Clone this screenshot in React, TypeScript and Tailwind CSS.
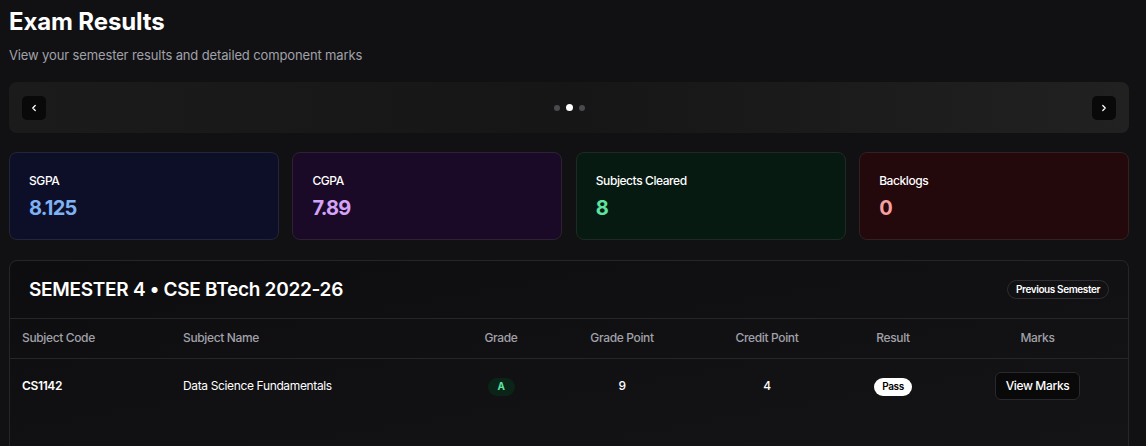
import React from 'react'

const stats = [
  { label: 'SGPA', value: '8.125', box: 'bg-[#0d0f29] border-[#23253a]', text: 'text-[#7fb2f5]' },
  { label: 'CGPA', value: '7.89', box: 'bg-[#1b0a27] border-[#2c2233]', text: 'text-[#d4a2f7]' },
  { label: 'Subjects Cleared', value: '8', box: 'bg-[#071a11] border-[#1f2a24]', text: 'text-[#5ee3a1]' },
  { label: 'Backlogs', value: '0', box: 'bg-[#23080c] border-[#33201f]', text: 'text-[#f8a0a0]' }
]

const subjects = [
  { code: 'CS1142', name: 'Data Science Fundamentals', grade: 'A', gp: 9, cp: 4, result: 'Pass' }
]

function Chevron({ dir }: { dir: 'left' | 'right' }) {
  return (
    <svg width="10" height="10" viewBox="0 0 24 24" fill="none" stroke="currentColor" strokeWidth="3" strokeLinecap="round" strokeLinejoin="round">
      {dir === 'left' ? <path d="M15 18l-6-6 6-6" /> : <path d="M9 18l6-6-6-6" />}
    </svg>
  )
}

export default function App() {
  return (
    <div className="min-h-[446px] bg-[#111113] pl-[9px] pr-[17px] pt-[6px] text-white" style={{ fontFamily: 'Inter, "Noto Sans", sans-serif' }}>
      <h1 className="text-[24px] font-bold leading-[32px] tracking-[-0.005em]">Exam Results</h1>
      <p className="mt-[7px] text-[13px] leading-[20px] tracking-[-0.01em] text-[#a1a1aa]">View your semester results and detailed component marks</p>

      {/* semester carousel */}
      <div className="mt-[17px] flex h-[51px] items-center justify-between rounded-lg bg-gradient-to-r from-[#1b1b1c] via-[#161617] to-[#212122] px-[13px]">
        <button className="flex h-[24px] w-[24px] items-center justify-center rounded-[5px] bg-[#09090a] text-white">
          <Chevron dir="left" />
        </button>
        <div className="flex items-center gap-[6px]">
          <span className="h-[6px] w-[6px] rounded-full bg-[#4a4a4e]" />
          <span className="h-[7px] w-[7px] rounded-full bg-white" />
          <span className="h-[6px] w-[6px] rounded-full bg-[#4a4a4e]" />
        </div>
        <button className="flex h-[24px] w-[24px] items-center justify-center rounded-[5px] bg-[#09090a] text-white">
          <Chevron dir="right" />
        </button>
      </div>

      {/* stat cards */}
      <div className="mt-[19px] grid grid-cols-4 gap-[13.5px]">
        {stats.map(s => (
          <div key={s.label} className={`h-[88px] rounded-lg border px-[19px] pt-[20px] ${s.box}`}>
            <div className="text-[12px] font-medium leading-[16px] tracking-[-0.035em] text-white">{s.label}</div>
            <div className={`mt-[5px] text-[20px] font-bold leading-[28px] tracking-[-0.04em] ${s.text}`}>{s.value}</div>
          </div>
        ))}
      </div>

      {/* results table */}
      <div className="mt-[20px] h-[200px] overflow-hidden rounded-t-lg border border-[#26262a] bg-gradient-to-br from-[#0d0d0f] via-[#111113] to-[#141416]">
        <div className="flex h-[58px] items-center justify-between border-b border-[#26262a] pl-[19px] pr-[19px]">
          <h2 className="text-[19px] font-semibold leading-[28px] tracking-[-0.015em]">SEMESTER 4 • CSE BTech 2022-26</h2>
          <button className="rounded-full border border-[#2e2e33] px-[8px] py-[2px] text-[10px] font-semibold leading-[13px] tracking-[-0.04em] text-white">
            Previous Semester
          </button>
        </div>
        <table className="w-full table-fixed border-collapse text-[12px] tracking-[-0.03em]">
          <thead>
            <tr className="h-[39px] border-b border-[#26262a] text-[#a1a1aa]">
              <th className="w-[161px] px-3 text-left font-medium">Subject Code</th>
              <th className="w-[282px] px-3 text-left font-medium">Subject Name</th>
              <th className="w-[96px] px-3 text-center font-medium">Grade</th>
              <th className="w-[146px] px-3 text-center font-medium">Grade Point</th>
              <th className="w-[144px] px-3 text-center font-medium">Credit Point</th>
              <th className="w-[108px] px-3 text-center font-medium">Result</th>
              <th className="px-3 text-center font-medium">Marks</th>
            </tr>
          </thead>
          <tbody>
            {subjects.map(s => (
              <tr key={s.code} className="h-[56px]">
                <td className="px-3 font-semibold">{s.code}</td>
                <td className="px-3">{s.name}</td>
                <td className="px-3 text-center">
                  <span className="inline-flex h-[18px] w-[27px] items-center justify-center rounded-full bg-[#0b2418] text-[10px] font-bold text-[#5ee3a1]">{s.grade}</span>
                </td>
                <td className="px-3 text-center font-medium">{s.gp}</td>
                <td className="px-3 text-center font-medium">{s.cp}</td>
                <td className="px-3 text-center">
                  <span className="inline-flex h-[18px] items-center rounded-full bg-white px-[8px] text-[10px] font-semibold text-black">{s.result}</span>
                </td>
                <td className="px-3 text-center">
                  <button className="h-[28px] rounded-md border border-[#2a2a2e] bg-[#09090a] px-[10px] text-[12px] font-medium text-white">View Marks</button>
                </td>
              </tr>
            ))}
          </tbody>
        </table>
      </div>
    </div>
  )
}
